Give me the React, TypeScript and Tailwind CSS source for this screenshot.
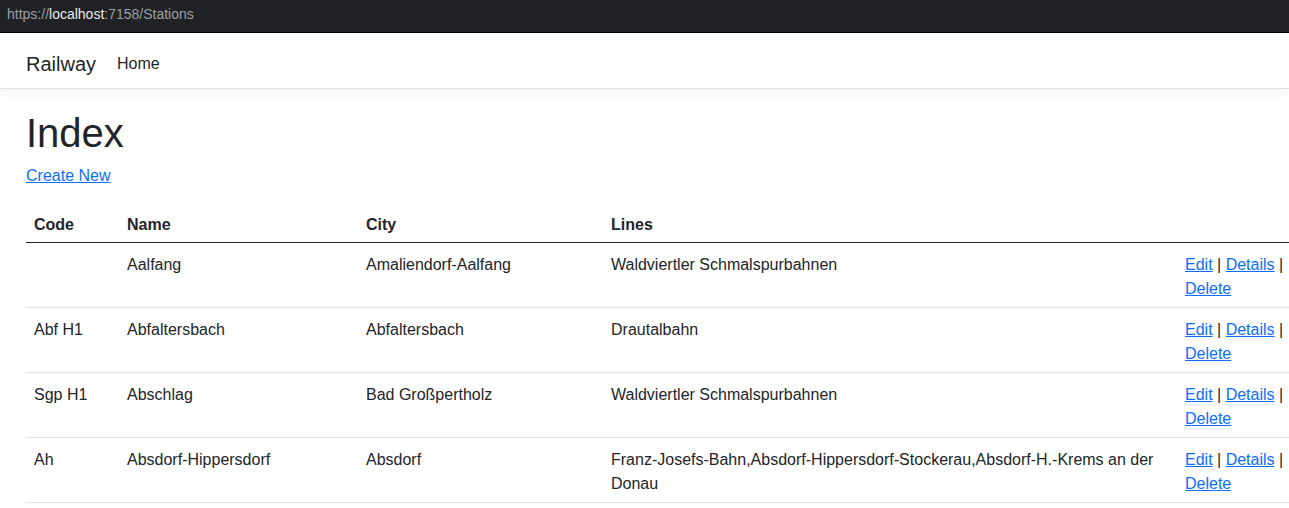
const rows = [
  { code: "", name: "Aalfang", city: "Amaliendorf-Aalfang", lines: "Waldviertler Schmalspurbahnen" },
  { code: "Abf H1", name: "Abfaltersbach", city: "Abfaltersbach", lines: "Drautalbahn" },
  { code: "Sgp H1", name: "Abschlag", city: "Bad Großpertholz", lines: "Waldviertler Schmalspurbahnen" },
  {
    code: "Ah",
    name: "Absdorf-Hippersdorf",
    city: "Absdorf",
    lines: "Franz-Josefs-Bahn,Absdorf-Hippersdorf-Stockerau,Absdorf-H.-Krems an der Donau",
  },
];

export default function App() {
  return (
    <div className="h-[508px] w-[1289px] overflow-hidden bg-white font-['Liberation_Sans',Arial,sans-serif] text-[16px] leading-6 text-[#212529]">
      {/* browser address bar */}
      <div className="flex h-[33px] items-start border-b border-black bg-[#202124] px-[7px] pt-[4px] text-[14px] leading-5">
        <span className="text-[#9aa0a6]">https://</span>
        <span className="text-[#e8eaed]">localhost</span>
        <span className="text-[#9aa0a6]">:7158/Stations</span>
      </div>

      <nav className="relative z-10 flex h-14 items-center border-b border-[#e5e5e5] bg-white px-[26px] pt-[6px] shadow-[0_4px_12px_rgba(0,0,0,0.05)]">
        <a className="mr-[21px] text-[20px] leading-[30px] text-[#212529]">Railway</a>
        <a className="text-[16px] text-[#212529]">Home</a>
      </nav>

      <main className="px-[26px] pt-[20px]">
        <h1 className="mb-[7px] text-[40px] leading-[48px] font-normal">Index</h1>
        <p className="mb-[15px]">
          <a className="text-[#0d6efd] underline">Create New</a>
        </p>

        <table className="w-[1277px] table-fixed border-collapse text-left">
          <colgroup>
            <col className="w-[93px]" />
            <col className="w-[239px]" />
            <col className="w-[245px]" />
            <col className="w-[574px]" />
            <col className="w-[126px]" />
          </colgroup>
          <thead>
            <tr className="border-b border-[#212529]">
              <th className="px-2 pt-[10px] pb-[5px] font-bold">Code</th>
              <th className="px-2 pt-[10px] pb-[5px] font-bold">Name</th>
              <th className="px-2 pt-[10px] pb-[5px] font-bold">City</th>
              <th className="px-2 pt-[10px] pb-[5px] font-bold">Lines</th>
              <th className="px-2 pt-[10px] pb-[5px]"></th>
            </tr>
          </thead>
          <tbody>
            {rows.map((r) => (
              <tr key={r.name} className="border-b border-[#dee2e6] align-top">
                <td className="px-2 pt-[10px] pb-[6px]">{r.code}</td>
                <td className="px-2 pt-[10px] pb-[6px]">{r.name}</td>
                <td className="px-2 pt-[10px] pb-[6px]">{r.city}</td>
                <td className="px-2 pt-[10px] pb-[6px]">{r.lines}</td>
                <td className="px-2 pt-[10px] pb-[6px]">
                  <a className="text-[#0d6efd] underline">Edit</a> |{" "}
                  <a className="text-[#0d6efd] underline">Details</a> |{" "}
                  <a className="text-[#0d6efd] underline">Delete</a>
                </td>
              </tr>
            ))}
          </tbody>
        </table>
      </main>
    </div>
  );
}
